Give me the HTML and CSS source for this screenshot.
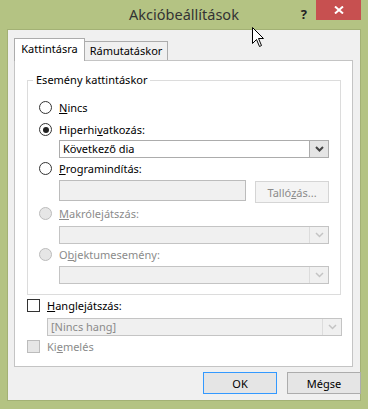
FILE: index.html
```html
<!DOCTYPE html>
<html lang="hu">
<head>
    <meta charset="UTF-8">
    <title>Akcióbeállítások</title>
    <link rel="stylesheet" href="styles.css">
</head>
<body>
    <div class="window">
        <div class="titlebar">
            <span class="title">Akcióbeállítások</span>
            <div class="controls">
                <span class="help">?</span>
                <span class="close">
                    <svg width="10" height="8" viewBox="0 0 10 8"><path d="M1 0.5 L9 7.5 M9 0.5 L1 7.5" stroke="#fff" stroke-width="2"/></svg>
                </span>
            </div>
        </div>

        <div class="client">
            <div class="tabs">
                <div class="tab active">Kattintásra</div>
                <div class="tab">Rámutatáskor</div>
            </div>

            <div class="panel">
                <fieldset class="group">
                    <legend>Esemény kattintáskor</legend>

                    <div class="opt first">
                        <span class="radio"></span>
                        <span><u>N</u>incs</span>
                    </div>
                    <div class="opt gap1">
                        <span class="radio checked"></span>
                        <span>Hiperhi<u>v</u>atkozás:</span>
                    </div>
                    <div class="combo">
                        <span class="value">Következő dia</span>
                        <span class="drop"><svg width="9" height="6" viewBox="0 0 9 6"><path d="M1 1 L4.5 4.5 L8 1" stroke="#444" stroke-width="2" fill="none"/></svg></span>
                    </div>
                    <div class="opt">
                        <span class="radio"></span>
                        <span><u>P</u>rogramindítás:</span>
                    </div>
                    <div class="path">
                        <span class="textbox"></span>
                        <span class="btn disabled">Talló<u>z</u>ás...</span>
                    </div>
                    <div class="opt disabled">
                        <span class="radio"></span>
                        <span><u>M</u>akrólejátszás:</span>
                    </div>
                    <div class="combo disabled gap2">
                        <span class="value"></span>
                        <span class="drop"><svg width="9" height="6" viewBox="0 0 9 6"><path d="M1 1 L4.5 4.5 L8 1" stroke="#c4c4c4" stroke-width="1.5" fill="none"/></svg></span>
                    </div>
                    <div class="opt disabled">
                        <span class="radio"></span>
                        <span>O<u>b</u>jektumesemény:</span>
                    </div>
                    <div class="combo disabled gap1">
                        <span class="value"></span>
                        <span class="drop"><svg width="9" height="6" viewBox="0 0 9 6"><path d="M1 1 L4.5 4.5 L8 1" stroke="#c4c4c4" stroke-width="1.5" fill="none"/></svg></span>
                    </div>
                </fieldset>

                <div class="opt check-row">
                    <span class="check"></span>
                    <span><u>H</u>anglejátszás:</span>
                </div>
                <div class="combo disabled sound">
                    <span class="value">[Nincs hang]</span>
                    <span class="drop"><svg width="9" height="6" viewBox="0 0 9 6"><path d="M1 1 L4.5 4.5 L8 1" stroke="#c4c4c4" stroke-width="1.5" fill="none"/></svg></span>
                </div>
                <div class="opt check-row disabled">
                    <span class="check"></span>
                    <span>Ki<u>e</u>melés</span>
                </div>
            </div>

            <div class="buttons">
                <span class="btn default">OK</span>
                <span class="btn">Mégse</span>
            </div>
        </div>

        <svg class="cursor" width="13" height="21" viewBox="0 0 13 21">
            <path d="M0.5 0.5 L0.5 16.5 L4.5 12.5 L7.5 19.5 L9.5 18.5 L6.5 11.5 L11.5 11.5 Z" fill="#fff" stroke="#000" stroke-width="1"/>
        </svg>
    </div>
</body>
</html>
```

FILE: styles.css
```css
/* Windows 8 style action settings dialog */
* {
    margin: 0;
    padding: 0;
    box-sizing: border-box;
}

body {
    font-family: 'Noto Sans', 'Open Sans', sans-serif;
    font-size: 11px;
    color: #000;
    background-color: #b4c383;
}

.window {
    position: relative;
    width: 368px;
    height: 409px;
    background-color: #b4c383;
}

/* title bar */
.titlebar {
    display: grid;
    height: 29px;
}

.title,
.controls {
    grid-area: 1 / 1;
}

.title {
    text-align: center;
    font-size: 14.5px;
    line-height: 29px;
    color: #333;
}

.controls {
    justify-self: end;
    display: flex;
    align-items: flex-start;
    margin-right: 7px;
}

.help {
    font-weight: bold;
    font-size: 13px;
    color: #222;
    margin-top: 5px;
    margin-right: 9px;
}

.close {
    display: flex;
    align-items: center;
    justify-content: center;
    width: 45px;
    height: 20px;
    background-color: #c75050;
}

/* client area */
.client {
    width: 354px;
    height: 372px;
    margin-left: 7px;
    border: 1px solid #a3b175;
    background-color: #f0f0f0;
    padding: 8px 0 0 6px;
}

.tabs {
    display: flex;
    align-items: flex-end;
    height: 23px;
    margin-bottom: -1px;
    position: relative;
    z-index: 1;
}

.tab {
    height: 19px;
    width: 84px;
    margin-left: -1px;
    margin-bottom: 1px;
    border: 1px solid #acacac;
    border-bottom: none;
    background-color: #f0f0f0;
    text-align: center;
    line-height: 18px;
}

.tab.active {
    height: 23px;
    width: 71px;
    margin-left: 0;
    margin-bottom: 0;
    background-color: #fff;
    line-height: 20px;
}

.panel {
    width: 339px;
    height: 307px;
    background-color: #fff;
    border: 1px solid #c4c4c4;
}

/* group box */
.group {
    margin: 11px 11px 0 12px;
    padding: 0 10px 10px 11px;
    border: 1px solid #dcdcdc;
}

.group legend {
    margin-left: -6px;
    padding: 0 3px;
    line-height: 16px;
}

.opt {
    display: flex;
    align-items: center;
    gap: 7px;
    height: 21px;
}

.opt.first {
    margin-top: 9px;
}

.gap1 {
    margin-top: 1px;
}

.gap2 {
    margin-top: 2px;
}

.opt.disabled {
    color: #8b8b8b;
}

.radio {
    width: 13px;
    height: 13px;
    border: 1px solid #333;
    border-radius: 50%;
    background-color: #fff;
    display: flex;
    align-items: center;
    justify-content: center;
}

.radio.checked::after {
    content: "";
    width: 6px;
    height: 6px;
    border-radius: 50%;
    background-color: #222;
}

.opt.disabled .radio,
.opt.disabled .check {
    border-color: #bcbcbc;
    background-color: #e6e6e6;
}

.check {
    width: 13px;
    height: 13px;
    border: 1px solid #333;
    background-color: #fff;
}

/* combo boxes */
.combo {
    display: flex;
    width: 270px;
    height: 18px;
    margin-left: 20px;
    border: 1px solid #acacac;
    background-color: #fff;
}

.combo .value {
    flex: 1;
    padding-left: 3px;
    line-height: 16px;
}

.combo .drop {
    width: 19px;
    display: flex;
    align-items: center;
    justify-content: center;
    background-color: #e5e5e5;
    border-left: 1px solid #acacac;
}

.combo.disabled {
    border-color: #c4c4c4;
    background-color: #f0f0f0;
    color: #8b8b8b;
}

.combo.disabled .drop {
    background-color: #f0f0f0;
    border-left-color: #dcdcdc;
}

.path {
    display: flex;
    align-items: flex-start;
    gap: 9px;
    height: 23px;
    margin: 1px 0 0 20px;
}

.textbox {
    width: 187px;
    height: 21px;
    border: 1px solid #bcbcbc;
    background-color: #f0f0f0;
}

/* buttons */
.btn {
    display: flex;
    align-items: center;
    justify-content: center;
    width: 74px;
    height: 22px;
    border: 1px solid #acacac;
    background-color: #e5e5e5;
}

.path .btn {
    margin-top: 1px;
}

.btn.disabled {
    border-color: #d5d5d5;
    background-color: #f4f4f4;
    color: #8b8b8b;
}

.btn.default {
    border-color: #3399ff;
}

.check-row {
    margin-left: 12px;
}

.combo.sound {
    width: 295px;
    margin: 2px 0 0 32px;
}

.buttons {
    display: flex;
    justify-content: flex-end;
    gap: 10px;
    width: 347px;
    margin-top: 5px;
}

.cursor {
    position: absolute;
    left: 252px;
    top: 27px;
}
```
